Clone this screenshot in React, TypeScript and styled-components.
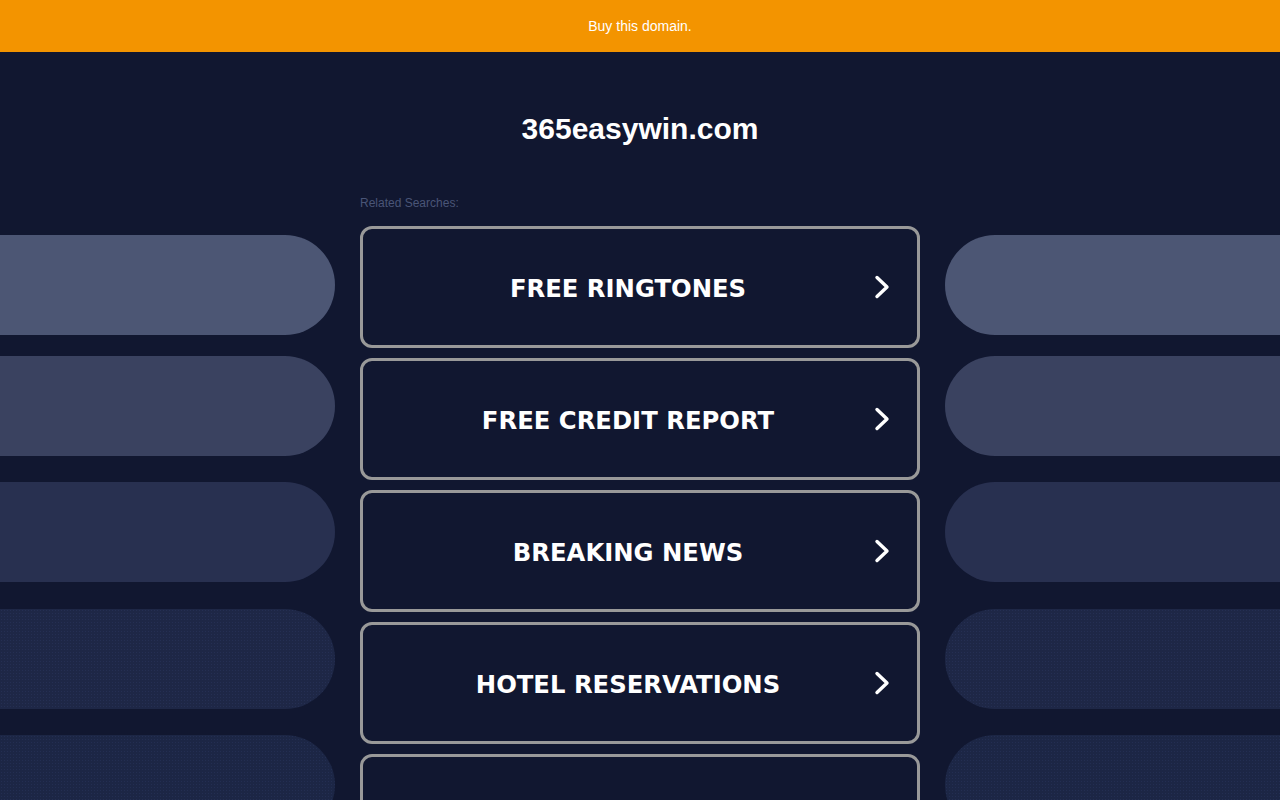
import React from "react";
import styled, { createGlobalStyle } from "styled-components";

const Global = createGlobalStyle`
  html, body { margin: 0; padding: 0; background: #111730; }
  body { font-family: "Liberation Sans", Arial, sans-serif; overflow: hidden; }
`;

const Page = styled.div`
  width: 1280px;
  height: 800px;
  overflow: hidden;
  background: #111730;
`;

const TopBar = styled.a`
  display: flex;
  align-items: center;
  justify-content: center;
  height: 52px;
  background: #f39400;
  color: #ffffff;
  font-size: 14px;
  text-decoration: none;
`;

const Title = styled.h1`
  margin: 59px 0 47px;
  text-align: center;
  font-family: "Liberation Sans", Arial, sans-serif;
  font-weight: 700;
  font-size: 30px;
  line-height: 36px;
  color: #ffffff;
`;

const Row = styled.div`
  display: flex;
  align-items: flex-start;
`;

const Side = styled.div`
  flex: 1;
  display: flex;
  flex-direction: column;
  padding-top: 41px;
`;

const Pill = styled.div<{ $color: string; $mt: number; $right?: boolean; $dots?: boolean }>`
  width: 100%;
  height: 100px;
  margin-top: ${(p) => p.$mt}px;
  background-color: ${(p) => p.$color};
  border-radius: ${(p) => (p.$right ? "50px 0 0 50px" : "0 50px 50px 0")};
  ${(p) =>
    p.$dots
      ? `background-image: radial-gradient(rgba(55,70,115,0.28) 0.6px, transparent 0.8px); background-size: 3px 3px;`
      : ""}
`;

const Center = styled.div`
  width: 560px;
  margin: 0 25px;
  flex-shrink: 0;
`;

const Label = styled.div`
  font-size: 12px;
  line-height: 18px;
  color: #4a5577;
  margin-bottom: 14px;
`;

const List = styled.div`
  display: flex;
  flex-direction: column;
  gap: 10px;
`;

const LinkButton = styled.a`
  display: flex;
  align-items: center;
  box-sizing: border-box;
  height: 122px;
  border: 3px solid #999999;
  border-radius: 12px;
  background: #111730;
  text-decoration: none;
`;

const LinkText = styled.span`
  flex: 1;
  padding: 2px 0 0 19px;
  text-align: center;
  font-family: "DejaVu Sans", Verdana, sans-serif;
  font-weight: 700;
  font-size: 24.3px;
  color: #ffffff;
  white-space: nowrap;
`;

const Chevron = styled.svg`
  flex-shrink: 0;
  width: 16px;
  height: 26px;
  margin-right: 27px;
`;

const links = ["FREE RINGTONES", "FREE CREDIT REPORT", "BREAKING NEWS", "HOTEL RESERVATIONS", "CHEAP FLIGHTS"];

const pills = [
  { color: "#4c5674", mt: 0 },
  { color: "#3a4260", mt: 21 },
  { color: "#283050", mt: 26 },
  { color: "#1e2746", mt: 27, dots: true },
  { color: "#1c2645", mt: 26, dots: true },
];

export default function App() {
  return (
    <Page>
      <Global />
      <TopBar href="#">Buy this domain.</TopBar>
      <Title>365easywin.com</Title>
      <Row>
        <Side>
          {pills.map((p, i) => (
            <Pill key={i} $color={p.color} $mt={p.mt} $dots={p.dots} />
          ))}
        </Side>
        <Center>
          <Label>Related Searches:</Label>
          <List>
            {links.map((l) => (
              <LinkButton href="#" key={l}>
                <LinkText>{l}</LinkText>
                <Chevron viewBox="0 0 16 26">
                  <polyline
                    points="3,3.5 13,13 3,22.5"
                    fill="none"
                    stroke="#ffffff"
                    strokeWidth="3.4"
                    strokeLinecap="round"
                    strokeLinejoin="round"
                  />
                </Chevron>
              </LinkButton>
            ))}
          </List>
        </Center>
        <Side>
          {pills.map((p, i) => (
            <Pill key={i} $color={p.color} $mt={p.mt} $dots={p.dots} $right />
          ))}
        </Side>
      </Row>
    </Page>
  );
}
